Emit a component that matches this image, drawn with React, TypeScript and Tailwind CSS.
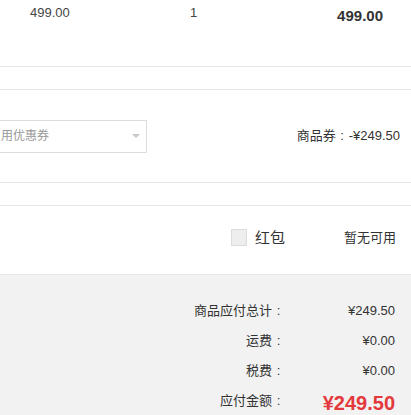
import React from "react";

const font = { fontFamily: '"Liberation Sans", "Noto Sans CJK SC", sans-serif' };

/* ────────── 合计行 ────────── */
function SumRow({ label, value, big }: { label: string; value: string; big?: boolean }) {
    return (
        <div className="flex items-center justify-end h-[30px] pr-[16px]">
            <span className="text-[13px] text-[#333] text-right">
                {label}
                <span className="inline-block w-[12px] pl-[1px] text-center">:</span>
            </span>
            <span
                className={
                    big
                        ? "w-[111px] text-right text-[20px] font-bold text-[#e4393c] leading-[24px] mt-[4px]"
                        : "w-[111px] text-right text-[13px] text-[#333]"
                }
            >
                {value}
            </span>
        </div>
    );
}

export default function App() {
    return (
        <div className="w-[411px] h-[415px] overflow-hidden bg-white" style={font}>
            {/* 商品行 */}
            <div className="flex items-start h-[67px] border-b border-[#e6e6e6] text-[#333]">
                <div className="w-[190px] pl-[30px] pt-[5px] text-[13px] leading-[16px] text-[#444]">499.00</div>
                <div className="flex-1 pt-[5px] text-[13px] leading-[16px] text-[#444]">1</div>
                <div className="pr-[28px] pt-[7px] text-[15px] leading-[18px] font-bold">499.00</div>
            </div>
            <div className="h-[23px] border-b border-[#e6e6e6]" />

            {/* 优惠券 */}
            <div className="flex items-center justify-between h-[93px] border-b border-[#e6e6e6]">
                <div className="ml-[-40px] w-[187px] h-[33px] border border-[#dcdcdc] flex items-center justify-between pl-[40px] pr-[6px]">
                    <span className="text-[12px] text-[#999]">用优惠券</span>
                    <span className="w-0 h-0 border-l-[4px] border-r-[4px] border-t-[4px] border-l-transparent border-r-transparent border-t-[#c8c8c8]" />
                </div>
                <div className="pr-[11px] text-[13px] text-[#333]">
                    商品券<span className="inline-block w-[13px] text-center">:</span>-¥249.50
                </div>
            </div>
            <div className="h-[23px] border-b border-[#e6e6e6]" />

            {/* 红包 */}
            <div className="flex items-start justify-end h-[69px] border-b border-[#e6e6e6] pt-[23px] pr-[15px]">
                <span className="w-[16px] h-[17px] border border-[#dcdcdc] bg-[#eee]" />
                <span className="ml-[8px] text-[15px] leading-[17px] text-[#333]">红包</span>
                <span className="ml-[59px] text-[13px] leading-[17px] text-[#333]">暂无可用</span>
            </div>

            {/* 合计 */}
            <div className="bg-[#f2f2f2] pt-[21px] pb-[20px]">
                <SumRow label="商品应付总计" value="¥249.50" />
                <SumRow label="运费" value="¥0.00" />
                <SumRow label="税费" value="¥0.00" />
                <SumRow label="应付金额" value="¥249.50" big />
            </div>
        </div>
    );
}
